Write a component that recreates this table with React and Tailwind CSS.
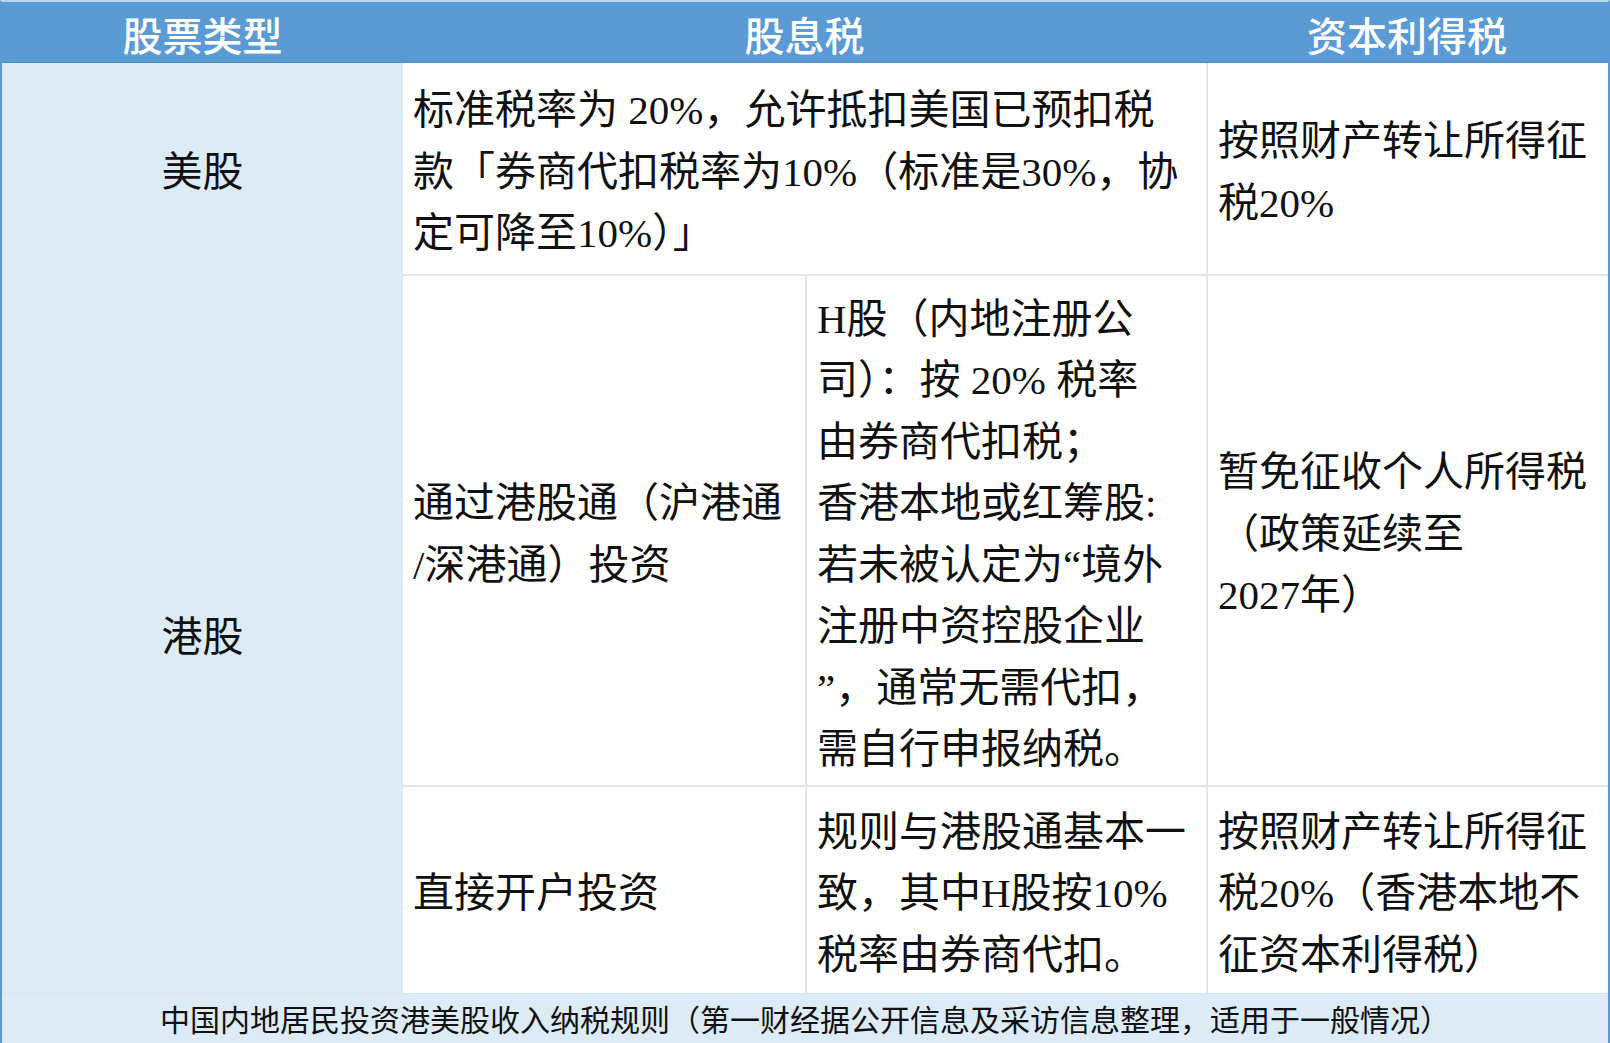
import React from 'react';

const bodyFont = { fontFamily: '"Liberation Serif", "Noto Sans CJK SC", serif' };
const headFont = { fontFamily: '"Noto Sans CJK SC", "Liberation Sans", sans-serif' };

const Cell = ({ lines, className = '' }) => (
  <div className={`flex flex-col justify-center bg-white pl-[10px] pt-2 text-[41px] leading-[61.5px] text-[#111] ${className}`}>
    {lines.map((line, i) => (
      <div key={i} className="whitespace-nowrap">{line}</div>
    ))}
  </div>
);

const App = () => {
  return (
    <div className="w-[1610px] h-[1043px] bg-[#ddebf7] border-x-2 border-b-2 border-t-2 border-x-[#5b9bd5] border-b-[#5b9bd5] border-t-[#bcd6ef] flex flex-col" style={bodyFont}>
      <div className="grid grid-cols-[401px_402px_401px_1fr] grid-rows-[61px_211px_511px_208px]">
        {/* header */}
        <div className="bg-[#5b9bd5] border-b border-[#4f8cc6] flex items-center justify-center pt-1 text-white text-[40px] font-medium" style={headFont}>股票类型</div>
        <div className="col-span-2 bg-[#5b9bd5] border-b border-[#4f8cc6] flex items-center justify-center pt-1 text-white text-[40px] font-medium" style={headFont}>股息税</div>
        <div className="bg-[#5b9bd5] border-b border-[#4f8cc6] flex items-center justify-center pt-1 text-white text-[40px] font-medium" style={headFont}>资本利得税</div>

        {/* 美股 */}
        <div className="bg-[#ddebf7] flex items-center justify-center pt-2 text-[41px] text-[#111]">美股</div>
        <Cell
          className="col-span-2"
          lines={[
            '标准税率为 20%，允许抵扣美国已预扣税',
            '款「券商代扣税率为10%（标准是30%，协',
            '定可降至10%）」',
          ]}
        />
        <Cell className="border-l-2 border-[#e3e3e3]" lines={['按照财产转让所得征', '税20%']} />

        {/* 港股 */}
        <div className="row-span-2 bg-[#ddebf7] flex items-center justify-center pt-2 text-[41px] text-[#111]">港股</div>
        <Cell className="border-t-2 border-[#e3e3e3]" lines={['通过港股通（沪港通', '/深港通）投资']} />
        <Cell
          className="border-t-2 border-l-2 border-[#e3e3e3]"
          lines={[
            'H股（内地注册公',
            '司）：按 20% 税率',
            '由券商代扣税；',
            '香港本地或红筹股:',
            '若未被认定为“境外',
            '注册中资控股企业',
            '”，通常无需代扣，',
            '需自行申报纳税。',
          ]}
        />
        <Cell className="border-t-2 border-l-2 border-[#e3e3e3]" lines={['暂免征收个人所得税', '（政策延续至', '2027年）']} />

        <Cell className="border-t-2 border-[#e3e3e3]" lines={['直接开户投资']} />
        <Cell className="border-t-2 border-l-2 border-[#e3e3e3]" lines={['规则与港股通基本一', '致，其中H股按10%', '税率由券商代扣。']} />
        <Cell className="border-t-2 border-l-2 border-[#e3e3e3]" lines={['按照财产转让所得征', '税20%（香港本地不', '征资本利得税）']} />
      </div>

      <div className="flex-1 flex items-center justify-center pt-1 border-t border-[#d8e3ee] bg-[#ddebf7] text-[30px] text-[#111] whitespace-nowrap">
        中国内地居民投资港美股收入纳税规则（第一财经据公开信息及采访信息整理，适用于一般情况）
      </div>
    </div>
  );
};

export default App;
